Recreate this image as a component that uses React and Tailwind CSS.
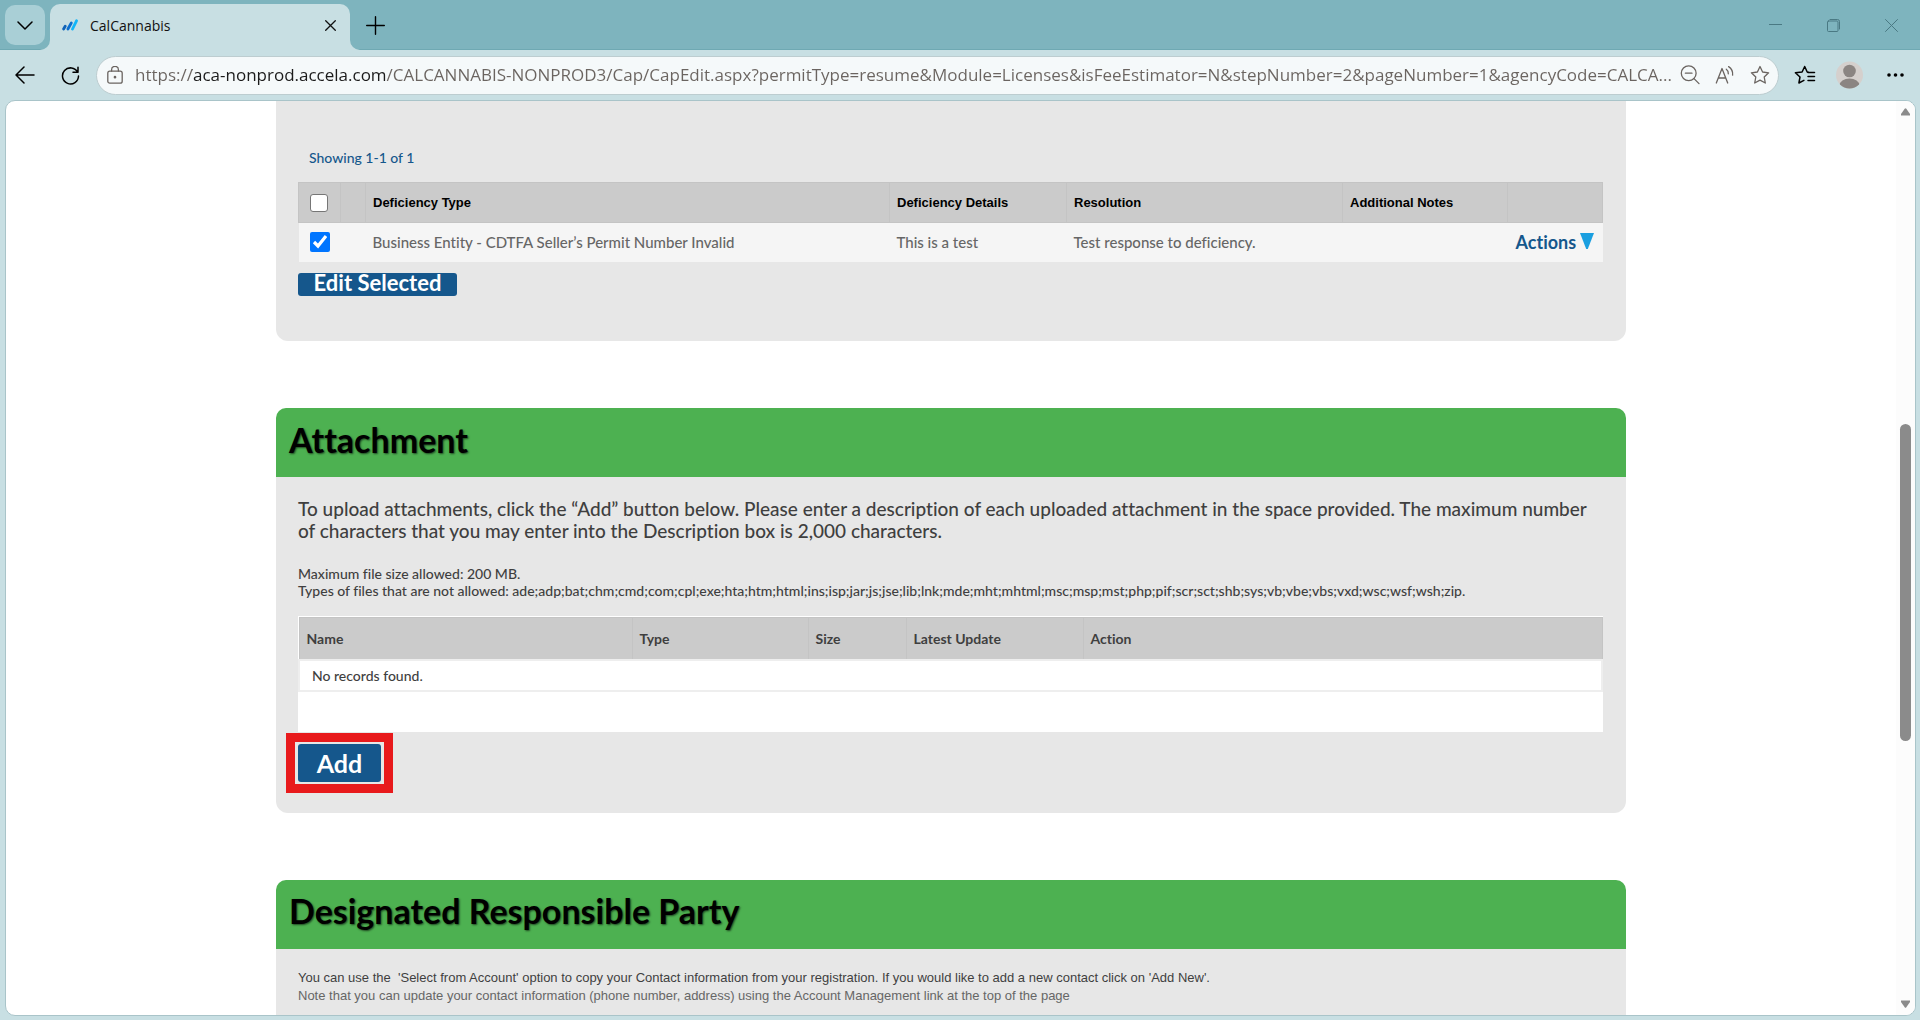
import React from "react";

const stroke = { fill: "none", stroke: "currentColor", strokeLinecap: "round", strokeLinejoin: "round" };
const starPath =
  "M10 1.5l2.6 5.5 6 .8-4.4 4.2 1.1 6L10 15.1 4.7 18l1.1-6L1.4 7.8l6-.8z";

const attachmentColumns = ["Name", "Type", "Size", "Latest Update", "Action"];

function TabStrip() {
  return (
    <div className="flex h-[50px] shrink-0 items-end border-b border-[#6fa9b3] bg-[#7eb4be]">
      <button
        aria-label="Tab actions"
        className="mb-1 ml-[5px] flex size-10 shrink-0 items-center justify-center rounded-[10px] bg-[#a9cfd6]"
      >
        <svg width="16" height="9" viewBox="0 0 16 9" strokeWidth="1.5" {...stroke}>
          <path d="M1 1l7 7 7-7" />
        </svg>
      </button>
      <div className="flex h-[50px] w-[325px] shrink-0 items-end">
        <div className="h-[5px] w-[5px]" />
        <div className="relative -mb-px flex h-[46px] w-[300px] items-center rounded-t-[10px] bg-[#c8dfe3] pr-[14px] pb-1 pl-3">
          <svg className="absolute bottom-0 -left-[10px]" width="10" height="10" viewBox="0 0 10 10">
            <path d="M10 0v10H0A10 10 0 0 0 10 0z" fill="#c8dfe3" />
          </svg>
          <svg className="absolute -right-[10px] bottom-0" width="10" height="10" viewBox="0 0 10 10">
            <path d="M0 0v10h10A10 10 0 0 1 0 0z" fill="#c8dfe3" />
          </svg>
          <svg width="16" height="12" viewBox="0 0 16 12" fill="none" strokeLinecap="round" strokeWidth="2.8">
            <path d="M1.6 10L3.2 7.2" stroke="#1063b8" />
            <path d="M5.9 10L9.3 4" stroke="#0b6fd0" />
            <path d="M10.5 10l4-8.2" stroke="#12b5f8" />
          </svg>
          <span className="ml-3 flex-1 text-[14px] text-[#111]">CalCannabis</span>
          <button aria-label="Close tab" className="text-[#111]">
            <svg width="11" height="11" viewBox="0 0 11 11" strokeWidth="1.3" {...stroke}>
              <path d="M.7.7l9.6 9.6M10.3.7L.7 10.3" />
            </svg>
          </button>
        </div>
      </div>
      <button aria-label="New tab" className="-ml-[4px] mb-[14px]">
        <svg width="19" height="19" viewBox="0 0 19 19" strokeWidth="1.4" {...stroke}>
          <path d="M9.5.7v17.6M.7 9.5h17.6" />
        </svg>
      </button>
      <div className="mb-[17px] ml-auto flex items-center gap-[45px] pr-[22px] text-[#4a7983]">
        <button aria-label="Minimize">
          <svg width="13" height="13" viewBox="0 0 13 13" strokeWidth="1" {...stroke}>
            <path d="M0 5.5h13" />
          </svg>
        </button>
        <button aria-label="Restore">
          <svg width="13" height="13" viewBox="0 0 13 13" strokeWidth="1" {...stroke}>
            <rect x=".5" y="2" width="10.5" height="10.5" rx="1" />
            <path d="M3 .5h7.5a2 2 0 0 1 2 2V10" />
          </svg>
        </button>
        <button aria-label="Close">
          <svg width="13" height="13" viewBox="0 0 13 13" strokeWidth="1" {...stroke}>
            <path d="M.5.5l12 12M12.5.5l-12 12" />
          </svg>
        </button>
      </div>
    </div>
  );
}

function Toolbar() {
  return (
    <div className="flex h-[50px] shrink-0 items-center pr-4 pl-[15px] text-black">
      <button aria-label="Back">
        <svg width="20" height="18" viewBox="0 0 20 18" strokeWidth="1.5" {...stroke}>
          <path d="M19 9H1M9 1L1 9l8 8" />
        </svg>
      </button>
      <button aria-label="Refresh" className="ml-[26px]">
        <svg width="19" height="19" viewBox="0 0 19 19" strokeWidth="1.5" {...stroke}>
          <path d="M16.6 6.2A8 8 0 1 0 17.5 10M17 1.3v5h-5" />
        </svg>
      </button>
      <form
        className="ml-4 flex h-[39px] min-w-0 flex-1 items-center rounded-full border border-[#bdcdd0] bg-[#f5f9fa] pr-2 pl-[10px] text-[#6a6460]"
        onSubmit={(e) => e.preventDefault()}
      >
        <button type="button" aria-label="View site information">
          <svg width="16" height="18" viewBox="0 0 16 18" strokeWidth="1.3" {...stroke}>
            <rect x=".8" y="5.2" width="14.4" height="12" rx="2" />
            <path d="M4.6 5V3.8a3.4 3.4 0 0 1 6.8 0V5" />
            <circle cx="8" cy="11.2" r=".7" fill="currentColor" />
          </svg>
        </button>
        <input
          aria-label="Address and search bar"
          className="ml-3 min-w-0 flex-1 bg-[linear-gradient(90deg,#6a6460_57px,#1b1b1b_57px,#1b1b1b_251px,#6a6460_251px)] bg-clip-text text-[17px] leading-6 text-transparent outline-none"
          defaultValue="https://aca-nonprod.accela.com/CALCANNABIS-NONPROD3/Cap/CapEdit.aspx?permitType=resume&Module=Licenses&isFeeEstimator=N&stepNumber=2&pageNumber=1&agencyCode=CALCA..."
        />
        <div className="ml-1 flex items-center gap-[15px]">
          <button type="button" aria-label="Zoom out">
            <svg width="20" height="20" viewBox="0 0 20 20" strokeWidth="1.3" {...stroke}>
              <circle cx="8.7" cy="8.2" r="7.4" />
              <path d="M14 13.6l5 5M5.4 8.2H12" />
            </svg>
          </button>
          <button type="button" aria-label="Read aloud">
            <svg width="20" height="20" viewBox="0 0 20 20" strokeWidth="1.3" {...stroke}>
              <path d="M1.3 18L7 3.5 12.7 18M3.3 13h7.4M11.3 4.2a5 5 0 0 1 2 4.6M13.6 1.6a9 9 0 0 1 4 8.6" />
            </svg>
          </button>
          <button type="button" aria-label="Add to favorites">
            <svg width="20" height="20" viewBox="0 0 20 20" strokeWidth="1.3" {...stroke}>
              <path d={starPath} />
            </svg>
          </button>
        </div>
      </form>
      <button aria-label="Favorites" className="ml-[15px]">
        <svg width="22" height="20" viewBox="0 0 22 20" strokeWidth="1.5" {...stroke}>
          <path d="M14.2 7.2l-1-.2L10.7 1.5 8.1 7l-6.7.8L6 12l-1.1 6 5-2.7" />
          <path d="M14 7.6h6.5M14 11.6h6.5M14 15.6h6.5" />
        </svg>
      </button>
      <button aria-label="Profile" className="ml-5">
        <svg width="27" height="28" viewBox="0 0 27 28">
          <clipPath id="avatar">
            <circle cx="13.5" cy="14" r="13.5" />
          </clipPath>
          <g clipPath="url(#avatar)">
            <rect width="27" height="28" fill="#d5d0cd" />
            <circle cx="13.5" cy="10" r="6.3" fill="#8b8582" />
            <ellipse cx="13.5" cy="24.5" rx="10" ry="7" fill="#8b8582" />
          </g>
        </svg>
      </button>
      <button aria-label="Settings and more" className="ml-6">
        <svg width="17" height="4" viewBox="0 0 17 4">
          <circle cx="2" cy="2" r="1.8" />
          <circle cx="8.5" cy="2" r="1.8" />
          <circle cx="15" cy="2" r="1.8" />
        </svg>
      </button>
    </div>
  );
}

function SectionTitle({ children }) {
  return (
    <h2 className="flex h-[69px] items-center rounded-t-[10px] bg-[#4db151] px-[13px] pb-[6px] text-[34px] leading-10 font-bold text-black [text-shadow:1px_1px_2px_rgba(0,0,0,0.6)]">
      {children}
    </h2>
  );
}

function DeficiencySection() {
  const th = "border border-[#c4c4c4] px-[7px] text-left font-bold";
  return (
    <section className="h-[240px] rounded-b-[12px] bg-[#e7e7e7] px-[22px] pt-12 pr-[23px]">
      <p className="pl-[11px] text-[14px] leading-[18px] font-medium text-[#15578c]">Showing 1-1 of 1</p>
      <table className="mt-[15px] w-full table-fixed border-collapse">
        <colgroup>
          <col className="w-[42px]" />
          <col className="w-[25px]" />
          <col />
          <col className="w-[177px]" />
          <col className="w-[276px]" />
          <col className="w-[165px]" />
          <col className="w-[95px]" />
        </colgroup>
        <thead className="bg-[#cbcbcb] font-['Liberation_Sans',Arial,sans-serif] text-[13px] text-black">
          <tr className="h-10">
            <th className="border border-[#c4c4c4] pl-[11px] text-left">
              <input
                type="checkbox"
                aria-label="Select all deficiencies"
                className="block size-[18px] appearance-none rounded-[3px] border border-[#767676] bg-white"
              />
            </th>
            <th className={th}></th>
            <th className={th}>Deficiency Type</th>
            <th className={th}>Deficiency Details</th>
            <th className={th}>Resolution</th>
            <th className={th}>Additional Notes</th>
            <th className={th}></th>
          </tr>
        </thead>
        <tbody className="bg-[#f5f5f5] text-[15px] font-medium text-[#666]">
          <tr className="h-[39px]">
            <td className="pl-[11px]">
              <input
                type="checkbox"
                defaultChecked
                aria-label="Select deficiency"
                className="block size-5 accent-[#0075ff]"
              />
            </td>
            <td></td>
            <td className="px-[7px]">Business Entity - CDTFA Seller’s Permit Number Invalid</td>
            <td className="px-[7px]">This is a test</td>
            <td className="px-[7px]">Test response to deficiency.</td>
            <td></td>
            <td className="pl-2">
              <a href="#actions" className="flex items-center gap-1 text-[18px] leading-6 font-bold text-[#15578c]">
                Actions
                <svg width="14" height="16" viewBox="0 0 14 16" className="mb-[3px]">
                  <path d="M0 0h14L7.8 16H6.2z" fill="#1a9fe0" />
                </svg>
              </a>
            </td>
          </tr>
        </tbody>
      </table>
      <button className="mt-[11px] flex h-[23px] w-[159px] items-center justify-center rounded-[3px] bg-[#15578c] pb-[3px] text-[22px] leading-5 font-bold whitespace-nowrap text-white">
        Edit Selected
      </button>
    </section>
  );
}

function AttachmentSection() {
  return (
    <section className="mt-[67px]">
      <SectionTitle>Attachment</SectionTitle>
      <div className="rounded-b-[12px] bg-[#e7e7e7] px-[22px] pt-[21px] pr-[23px] pb-5 text-[#3f3f3f]">
        <p className="text-[19px] leading-[22px] font-medium">
          To upload attachments, click the “Add” button below. Please enter a description of each uploaded
          attachment in the space provided. The maximum number of characters that you may enter into the
          Description box is 2,000 characters.
        </p>
        <p className="mt-[23px] text-[14px] leading-[17px] font-medium">
          Maximum file size allowed: 200 MB.
          <br />
          Types of files that are not allowed:
          {" "}ade;adp;bat;chm;cmd;com;cpl;exe;hta;htm;html;ins;isp;jar;js;jse;lib;lnk;mde;mht;mhtml;msc;msp;mst;php;pif;scr;sct;shb;sys;vb;vbe;vbs;vxd;wsc;wsf;wsh;zip.
        </p>
        <div className="mt-[17px] bg-white pt-px pb-10">
          <table className="w-full table-fixed border-collapse text-[14px]">
            <colgroup>
              <col className="w-[333px]" />
              <col className="w-[176px]" />
              <col className="w-[98px]" />
              <col className="w-[177px]" />
              <col />
            </colgroup>
            <thead>
              <tr className="h-[42px] bg-[#cbcbcb]">
                {attachmentColumns.map((name) => (
                  <th key={name} className="border border-[#c4c4c4] px-[7px] text-left font-bold">
                    {name}
                  </th>
                ))}
              </tr>
            </thead>
            <tbody>
              <tr className="h-[31px]">
                <td colSpan={5} className="border-2 border-[#eee] px-3 font-medium">
                  No records found.
                </td>
              </tr>
            </tbody>
          </table>
        </div>
        <div className="mt-px -ml-3 w-fit border-9 border-[#e81a1c] px-[3px] py-[2px]">
          <button className="flex h-[38px] w-[83px] items-center justify-center rounded-[3px] bg-[#15578c] text-[25px] leading-7 font-bold text-white">
            Add
          </button>
        </div>
      </div>
    </section>
  );
}

function ResponsiblePartySection() {
  return (
    <section className="mt-[67px]">
      <SectionTitle>Designated Responsible Party</SectionTitle>
      <div className="bg-[#e7e7e7] px-[22px] pt-5 pb-10 font-['Liberation_Sans',Arial,sans-serif] text-[13px] leading-[18px]">
        <p className="text-[#3f3f3f]">
          You can use the &nbsp;'Select from Account' option to copy your Contact information from your
          registration. If you would like to add a new contact click on 'Add New'.
        </p>
        <p className="text-[#666]">
          Note that you can update your contact information (phone number, address) using the Account
          Management link at the top of the page
        </p>
      </div>
    </section>
  );
}

function Scrollbar() {
  return (
    <div className="flex w-[19px] shrink-0 flex-col items-center bg-[#fcfcfc] py-[7px] text-[#8b8b8b]">
      <svg width="9" height="8" viewBox="0 0 9 8" fill="currentColor">
        <path d="M3.7.8a1 1 0 0 1 1.6 0L9 6v1.5H0V6z" />
      </svg>
      <div className="grow-[308]" />
      <div className="w-[11px] grow-[317] rounded-full bg-[#8b8b8b]" />
      <div className="grow-[259]" />
      <svg width="9" height="8" viewBox="0 0 9 8" fill="currentColor">
        <path d="M3.7 7.2a1 1 0 0 0 1.6 0L9 2V.5H0V2z" />
      </svg>
    </div>
  );
}

export default function App() {
  return (
    <div className="flex h-screen flex-col overflow-hidden bg-[#c8dfe3] font-['Open_Sans','Noto_Sans',sans-serif]">
      <TabStrip />
      <Toolbar />
      <div className="mr-1 mb-1 ml-[5px] flex min-h-0 flex-1 overflow-hidden rounded-[10px] border border-[#a9c4c9] bg-white">
        <main className="min-w-0 flex-1 overflow-hidden font-[Lato,sans-serif] [font-variant-ligatures:no-common-ligatures]">
          <div className="mx-auto w-full max-w-[1350px]">
            <DeficiencySection />
            <AttachmentSection />
            <ResponsiblePartySection />
          </div>
        </main>
        <Scrollbar />
      </div>
    </div>
  );
}
